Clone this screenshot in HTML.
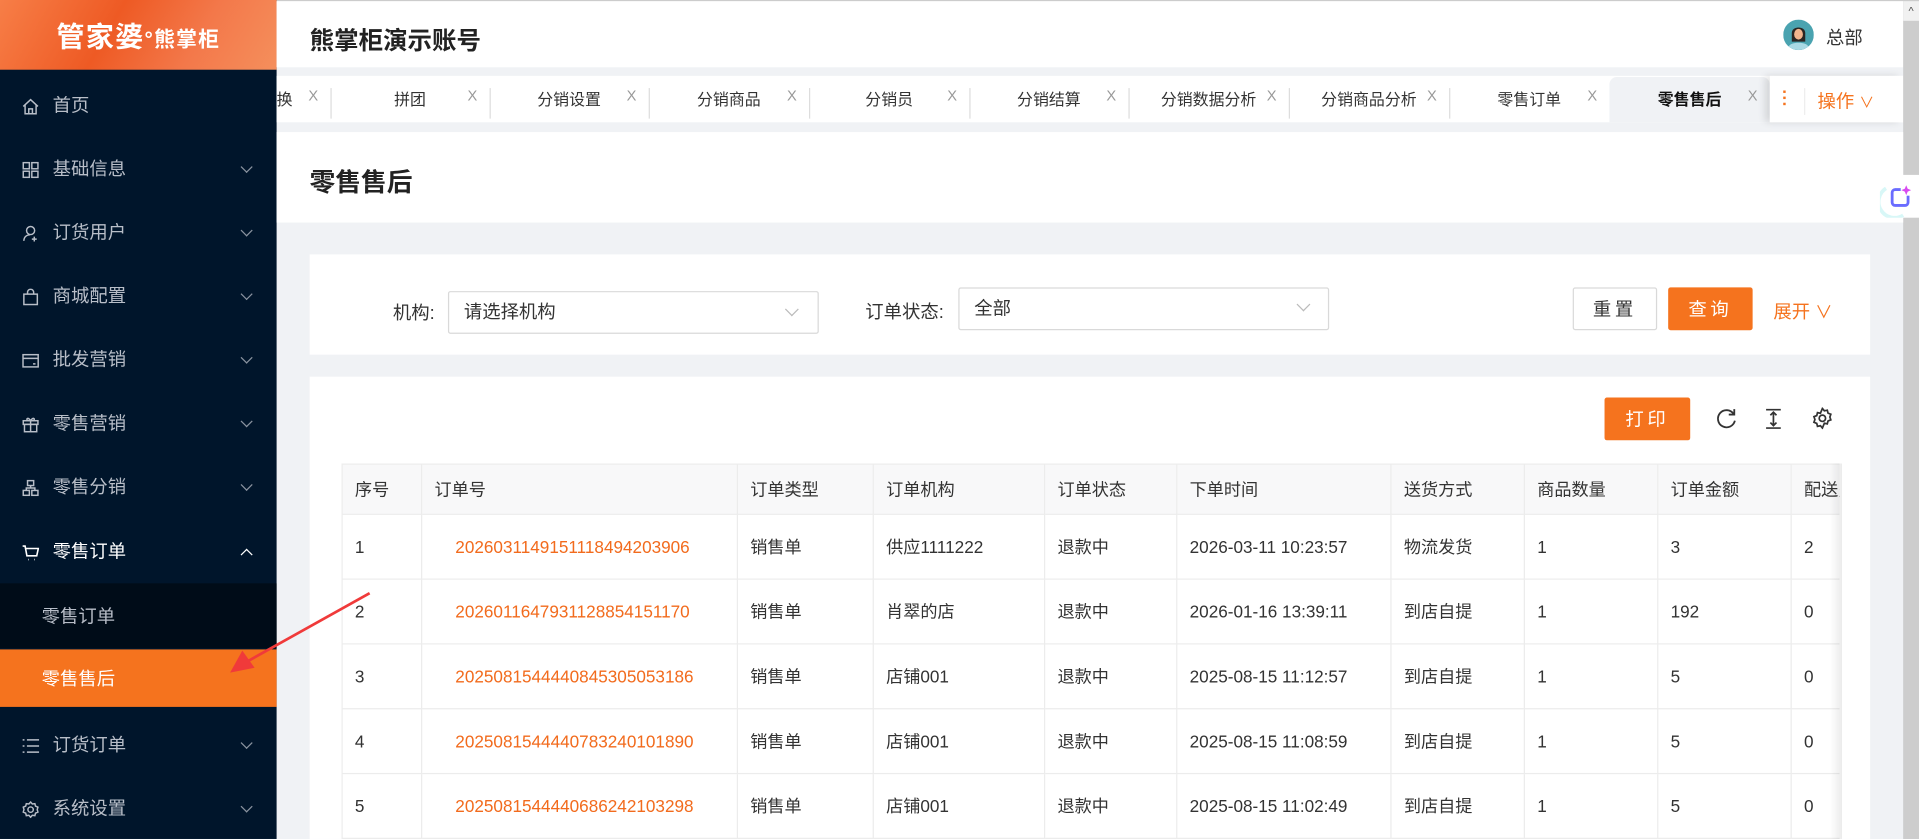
<!DOCTYPE html>
<html><head><meta charset="utf-8"><style>
*{margin:0;padding:0;box-sizing:border-box}
html,body{width:1919px;height:839px;overflow:hidden;background:#f0f2f5}
body{font-family:"Liberation Sans","Noto Sans CJK SC",sans-serif;color:#333}
#w{position:absolute;left:0;top:0;width:1568px;height:686px;transform:scale(1.2239,1.2230);transform-origin:0 0;background:#f0f2f5;overflow:hidden}
.a{position:absolute}
.side{left:0;top:0;width:226px;height:686px;background:#00152b}
.logo{left:0;top:0;width:226px;height:57px;background:linear-gradient(120deg,#f77e47 0%,#ee5a24 40%,#f3784a 70%,#f58f5c 100%);color:#fff;font-weight:bold;font-size:23px;text-align:center;line-height:60px;letter-spacing:1px}
.logo small{font-size:17px;font-weight:bold}
.nav{left:0;width:226px;height:52px;color:#b8bec8;font-size:15px;line-height:52px}
.nav .ic{position:absolute;left:18px;top:19px;width:14px;height:14px}
.nav .t{position:absolute;left:43px}
.nav .ar{position:absolute;left:198px;top:20px;width:7px;height:7px;border-right:1.3px solid #8a93a0;border-bottom:1.3px solid #8a93a0;transform:rotate(45deg)}
.nav .up{top:24px;transform:rotate(-135deg);border-color:#fff}
.hdr{left:226px;top:1px;width:1329px;height:54px;background:#fff}
.tabs{left:226px;top:62px;width:1329px;height:38px;background:#fff}
.tab{position:absolute;top:0;height:38px;font-size:13px;color:#333;line-height:40px;text-align:center}
.tab .x{position:absolute;right:10px;top:-4px;color:#999;font-size:12px}
.sep{position:absolute;top:10px;width:1px;height:25px;background:#ddd}
.card{background:#fff}
.lbl{font-size:15px;color:#333}
.sel{border:1px solid #d9d9d9;border-radius:2px;background:#fff;font-size:15px;color:#333;padding-left:12px;line-height:32px}
.chev{position:absolute;width:8px;height:8px;border-right:1px solid #bbb;border-bottom:1px solid #bbb;transform:rotate(45deg)}
.btn{font-size:15px;text-align:center;border-radius:2px;letter-spacing:3px}
table{border-collapse:collapse;font-size:14px;table-layout:fixed}
td,th{border:1px solid #ececec;text-align:left;padding-left:10px;font-weight:normal;color:#333;white-space:nowrap;overflow:hidden}
th{background:#f8f8f9;height:41px;font-size:14px}
td{height:53px}
td.o{color:#f26b1d;padding-left:27px}
</style></head><body><div id="w">
<div class="a" style="left:0;top:0;width:1568px;height:1px;background:#ccc"></div>

<div class="a side">
<div class="a logo">管家婆<small>°熊掌柜</small></div>
<div class="a nav" style="top:61px"><svg class="ic" viewBox="0 0 14 14" fill="none" stroke="#b8bec8" stroke-width="1.2"><path d="M1 7L7 1.5 13 7M2.5 5.8V13h9V5.8M5.5 13V9h3v4"/></svg><span class="t">首页</span></div>
<div class="a nav" style="top:113px"><svg class="ic" viewBox="0 0 14 14" fill="none" stroke="#b8bec8" stroke-width="1.2"><rect x="1" y="1" width="5" height="5"/><rect x="8" y="1" width="5" height="5"/><rect x="1" y="8" width="5" height="5"/><rect x="8" y="8" width="5" height="5"/></svg><span class="t">基础信息</span><i class="ar"></i></div>
<div class="a nav" style="top:165px"><svg class="ic" viewBox="0 0 14 14" fill="none" stroke="#b8bec8" stroke-width="1.2"><circle cx="7" cy="4.5" r="3.3"/><path d="M1.5 13c0-3 2-5 5-5M10 9.5v4M8 11.5h4"/></svg><span class="t">订货用户</span><i class="ar"></i></div>
<div class="a nav" style="top:217px"><svg class="ic" viewBox="0 0 14 14" fill="none" stroke="#b8bec8" stroke-width="1.2"><rect x="1.5" y="4.5" width="11" height="8.5"/><path d="M4.5 4.5V3a2.5 2.5 0 015 0v1.5"/></svg><span class="t">商城配置</span><i class="ar"></i></div>
<div class="a nav" style="top:269px"><svg class="ic" viewBox="0 0 14 14" fill="none" stroke="#b8bec8" stroke-width="1.2"><rect x="0.8" y="2" width="12.4" height="10"/><path d="M0.8 5h12.4M9 9.5h2"/></svg><span class="t">批发营销</span><i class="ar"></i></div>
<div class="a nav" style="top:321px"><svg class="ic" viewBox="0 0 14 14" fill="none" stroke="#b8bec8" stroke-width="1.2"><rect x="1" y="4" width="12" height="3"/><rect x="2" y="7" width="10" height="6"/><path d="M7 4v9M4.5 4C3 2 5 1 7 4c2-3 4-2 2.5 0"/></svg><span class="t">零售营销</span><i class="ar"></i></div>
<div class="a nav" style="top:373px"><svg class="ic" viewBox="0 0 14 14" fill="none" stroke="#b8bec8" stroke-width="1.2"><rect x="4.5" y="1" width="5" height="4"/><rect x="1" y="9" width="5" height="4"/><rect x="8" y="9" width="5" height="4"/><path d="M7 5v2M3.5 9V7h7v2"/></svg><span class="t">零售分销</span><i class="ar"></i></div>
<div class="a nav" style="top:426px;color:#fff"><svg class="ic" viewBox="0 0 14 14" fill="none" stroke="#fff" stroke-width="1.3"><path d="M0.5 1.5h2l1.5 8h8l1.3-6H3M5 12.5h.5M10 12.5h.5"/></svg><span class="t">零售订单</span><i class="ar up"></i></div>
<div class="a" style="left:0;top:477px;width:226px;height:53px;background:#000c18;color:#b8bec8;font-size:15px;line-height:55px;padding-left:34px">零售订单</div>
<div class="a" style="left:0;top:531px;width:226px;height:47px;background:#f5731e;color:#fff;font-size:15px;line-height:49px;padding-left:34px">零售售后</div>
<div class="a nav" style="top:584px"><svg class="ic" viewBox="0 0 14 14" fill="none" stroke="#b8bec8" stroke-width="1.2"><path d="M4 2h10M4 7h10M4 12h10M0.5 2h1.5M0.5 7h1.5M0.5 12h1.5"/></svg><span class="t">订货订单</span><i class="ar"></i></div>
<div class="a nav" style="top:636px"><svg class="ic" viewBox="0 0 14 14" fill="none" stroke="#b8bec8" stroke-width="1.2"><circle cx="7" cy="7" r="2.2"/><path d="M7 .8l1.4 1.6 2.1-.3.5 2 2 .9-.6 2 .6 2-2 .9-.5 2-2.1-.3L7 13.2l-1.4-1.6-2.1.3-.5-2-2-.9.6-2-.6-2 2-.9.5-2 2.1.3z"/></svg><span class="t">系统设置</span><i class="ar"></i></div>
</div>

<div class="a hdr"></div>
<div class="a" style="left:253px;top:17px;font-size:20px;font-weight:bold;color:#222">熊掌柜演示账号</div>
<svg class="a" style="left:1457px;top:16px" width="25" height="25" viewBox="0 0 25 25"><circle cx="12.5" cy="12.5" r="12.5" fill="#4aa3b0"/><path d="M7 11c0-6 11-6 11 0v7H7z" fill="#2b2522"/><ellipse cx="12.5" cy="12" rx="3.6" ry="4.4" fill="#f2b48d"/><path d="M4.5 22c2-4 14-4 16 0a12.5 12.5 0 01-16 0z" fill="#a9d9e4"/></svg>
<div class="a" style="left:1492px;top:20px;font-size:15px;color:#333">总部</div>

<div class="a tabs"></div>
<div class="a" style="left:1315px;top:63px;width:131px;height:37px;background:#f0f2f5;border-radius:6px 6px 0 0"></div>
<div class="a" style="left:226px;top:62px;width:1220px;height:38px;overflow:hidden">
<div class="tab" style="left:-44px;width:88px">兑换<span class="x">X</span></div>
<div class="sep" style="left:44px"></div>
<div class="tab" style="left:44px;width:130px">拼团<span class="x">X</span></div>
<div class="sep" style="left:174px"></div>
<div class="tab" style="left:174px;width:130px">分销设置<span class="x">X</span></div>
<div class="sep" style="left:304px"></div>
<div class="tab" style="left:304px;width:131px">分销商品<span class="x">X</span></div>
<div class="sep" style="left:435px"></div>
<div class="tab" style="left:435px;width:131px">分销员<span class="x">X</span></div>
<div class="sep" style="left:566px"></div>
<div class="tab" style="left:566px;width:130px">分销结算<span class="x">X</span></div>
<div class="sep" style="left:696px"></div>
<div class="tab" style="left:696px;width:131px">分销数据分析<span class="x">X</span></div>
<div class="sep" style="left:827px"></div>
<div class="tab" style="left:827px;width:131px">分销商品分析<span class="x">X</span></div>
<div class="sep" style="left:958px"></div>
<div class="tab" style="left:958px;width:131px">零售订单<span class="x">X</span></div>
<div class="tab" style="left:1089px;width:131px;font-weight:bold;color:#111">零售售后<span class="x" style="font-weight:normal">X</span></div>
</div>
<div class="a" style="left:1446px;top:62px;width:109px;height:38px;background:#fff;box-shadow:-4px 0 6px rgba(0,0,0,.12)"></div>
<div class="a" style="left:1457px;top:74px;width:2px;height:2px;background:#f5731e;box-shadow:0 5px 0 #f5731e,0 10px 0 #f5731e"></div>
<div class="a" style="left:1474px;top:72px;width:1px;height:22px;background:#eee"></div>
<div class="a" style="left:1485px;top:72px;font-size:15px;color:#f5731e">操作 <span style="font-size:12px">∨</span></div>

<div class="a" style="left:1555px;top:1px;width:13px;height:685px;background:#cdcdcd"></div>
<div class="a" style="left:1555px;top:1px;width:13px;height:16px;background:#f1f1f1;font-size:9px;text-align:center;color:#555;line-height:16px">^</div>

<div class="a card" style="left:226px;top:108px;width:1329px;height:74px"></div>
<div class="a" style="left:253px;top:133px;font-size:21px;font-weight:bold;color:#222">零售售后</div>

<div class="a card" style="left:253px;top:208px;width:1275px;height:82px"></div>
<div class="a lbl" style="left:321px;top:245px">机构:</div>
<div class="a sel" style="left:366px;top:238px;width:303px;height:35px;line-height:34px">请选择机构</div>
<i class="chev" style="left:643px;top:249px"></i>
<div class="a lbl" style="left:707px;top:244px">订单状态:</div>
<div class="a sel" style="left:783px;top:235px;width:303px;height:35px;line-height:34px">全部</div>
<i class="chev" style="left:1061px;top:245px"></i>
<div class="a btn" style="left:1285px;top:235px;width:69px;height:35px;border:1px solid #d9d9d9;line-height:35px;background:#fff">重置</div>
<div class="a btn" style="left:1363px;top:235px;width:69px;height:35px;background:#f5731e;color:#fff;line-height:37px">查询</div>
<div class="a" style="left:1449px;top:244px;font-size:15px;color:#f5731e">展开 <span style="font-size:14px">∨</span></div>

<div class="a card" style="left:253px;top:308px;width:1275px;height:378px"></div>
<div class="a btn" style="left:1311px;top:325px;width:70px;height:35px;background:#f5731e;color:#fff;line-height:37px">打印</div>
<svg class="a" style="left:1402px;top:333px" width="18" height="18" viewBox="0 0 18 18" fill="none" stroke="#333" stroke-width="1.5"><path d="M14.5 5.5A7 7 0 1 0 15.5 11"/><path d="M15 1.5v4.5h-4.5"/></svg>
<svg class="a" style="left:1441px;top:334px" width="16" height="17" viewBox="0 0 16 17" fill="none" stroke="#333" stroke-width="1.4"><path d="M2 1h12M2 16h12M8 3v11M5.5 5.5L8 3l2.5 2.5M5.5 11.5L8 14l2.5-2.5"/></svg>
<svg class="a" style="left:1480px;top:333px" width="18" height="18" viewBox="0 0 18 18" fill="none" stroke="#333" stroke-width="1.4"><circle cx="9" cy="9" r="2.6"/><path d="M9 1l1.6 1.9 2.4-.5.6 2.4 2.3.9-.8 2.3.8 2.3-2.3.9-.6 2.4-2.4-.5L9 17l-1.6-1.9-2.4.5-.6-2.4-2.3-.9.8-2.3-.8-2.3 2.3-.9.6-2.4 2.4.5z"/></svg>

<div class="a" style="left:279px;top:379px;width:1224px;height:307px;overflow:hidden">
<table style="width:1300px">
<colgroup><col style="width:65px"><col style="width:258px"><col style="width:111px"><col style="width:140px"><col style="width:108px"><col style="width:175px"><col style="width:109px"><col style="width:109px"><col style="width:109px"><col style="width:116px"></colgroup>
<tr><th>序号</th><th>订单号</th><th>订单类型</th><th>订单机构</th><th>订单状态</th><th>下单时间</th><th>送货方式</th><th>商品数量</th><th>订单金额</th><th>配送费</th></tr>
<tr><td>1</td><td class="o">2026031149151118494203906</td><td>销售单</td><td>供应1111222</td><td>退款中</td><td>2026-03-11 10:23:57</td><td>物流发货</td><td>1</td><td>3</td><td>2</td></tr>
<tr><td>2</td><td class="o">2026011647931128854151170</td><td>销售单</td><td>肖翠的店</td><td>退款中</td><td>2026-01-16 13:39:11</td><td>到店自提</td><td>1</td><td>192</td><td>0</td></tr>
<tr><td>3</td><td class="o">2025081544440845305053186</td><td>销售单</td><td>店铺001</td><td>退款中</td><td>2025-08-15 11:12:57</td><td>到店自提</td><td>1</td><td>5</td><td>0</td></tr>
<tr><td>4</td><td class="o">2025081544440783240101890</td><td>销售单</td><td>店铺001</td><td>退款中</td><td>2025-08-15 11:08:59</td><td>到店自提</td><td>1</td><td>5</td><td>0</td></tr>
<tr><td>5</td><td class="o">2025081544440686242103298</td><td>销售单</td><td>店铺001</td><td>退款中</td><td>2025-08-15 11:02:49</td><td>到店自提</td><td>1</td><td>5</td><td>0</td></tr>
</table>
</div>
<div class="a" style="left:1495px;top:379px;width:10px;height:307px;background:linear-gradient(90deg,rgba(0,0,0,0),rgba(0,0,0,.08))"></div>

<div class="a" style="left:1553px;top:143px;width:15px;height:35px;background:#fff"></div>
<svg class="a" style="left:1536px;top:146px" width="32" height="32" viewBox="0 0 32 32"><path d="M5 8a12 12 0 0 0 14 22" fill="none" stroke="#d8f7f7" stroke-width="3"/><rect x="10" y="9" width="13" height="13" rx="2.5" fill="none" stroke="#6a6cff" stroke-width="2.3"/><rect x="17" y="5" width="9" height="9" fill="#fff"/><path d="M21.5 5.5l1.2 2.8 2.8 1.2-2.8 1.2-1.2 2.8-1.2-2.8-2.8-1.2 2.8-1.2z" fill="#d84bf0"/></svg>

<svg class="a" style="left:180px;top:480px" width="130" height="80" viewBox="0 0 130 80"><path d="M122 5L20 62" stroke="#f03a3a" stroke-width="2.2"/><path d="M8 70l10-18 10 14z" fill="#f03a3a"/></svg>
</div></body></html>
